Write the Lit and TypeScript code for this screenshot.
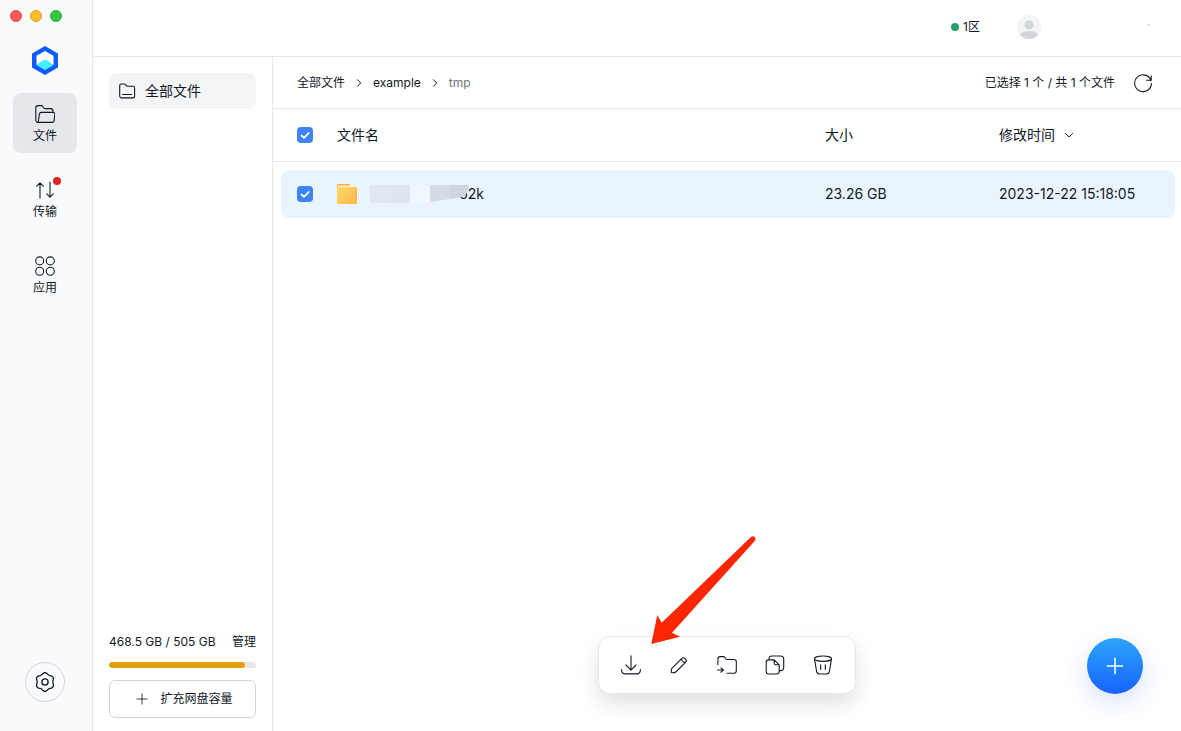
import { LitElement, html, svg, css } from "lit";
import { customElement, property, state } from "lit/decorators.js";
import { classMap } from "lit/directives/class-map.js";

// Outline of a soft cog with six lobes, one of them pointing up.
const cogOutline =
  "M" +
  Array.from({ length: 72 }, (_, i) => {
    const a = (i * Math.PI) / 36;
    const r = 8.6 + 0.8 * Math.cos(6 * a);
    return `${(10 + r * Math.sin(a)).toFixed(2)} ${(10 - r * Math.cos(a)).toFixed(2)}`;
  }).join("L") +
  "Z";

const icons: Record<string, unknown> = {
  folderOpen: svg`<path d="M2.2 18.3C1.3 18 .8 17.3 .8 16.3V3.8C.8 2.4 1.6 1.6 3 1.6H6.3C7.2 1.6 7.6 2 8 2.7L8.6 3.8C9 4.4 9.3 4.6 10 4.6H15.8C17.2 4.6 18 5.4 18 6.8V8.4"/><path d="M2.2 18.3C3 18.1 3.4 17.6 3.5 16.8L4.3 10.4C4.5 9.1 5.1 8.4 6.4 8.4H18C19.4 8.4 20 9.3 19.8 10.6L19.2 16.2C19.1 17.7 18.3 18.4 17 18.4H2.6"/>`,
  transfer: svg`<path d="M5 18V2.800M1.700 6.100 5 2.800 8.300 6.100M15 2V17.200M11.700 13.900 15 17.200 18.300 13.900"/>`,
  apps: svg`<circle cx="4.7" cy="4.9" r="4"/><circle cx="15.3" cy="4.9" r="4"/><circle cx="4.7" cy="15.3" r="4"/><circle cx="15.3" cy="15.3" r="4"/>`,
  gear: svg`<path d=${cogOutline}/><circle cx="10" cy="10" r="3.100"/>`,
  folder: svg`<path d="M2.700 15V4.500C2.700 3.500 3.200 3 4.200 3H7.300C8 3 8.300 3.200 8.600 3.700L9.100 4.400C9.500 5 9.800 5.200 10.500 5.200H15.900C17 5.200 17.600 5.800 17.600 6.900V15.200C17.600 16.300 17 16.900 16 16.900H4.300C3.200 16.900 2.700 16.200 2.700 15ZM5.500 13.500H14.700"/>`,
  chevronRight: svg`<path d="M7.500 4.500 12.800 10 7.500 15.500"/>`,
  chevronDown: svg`<path d="M4 7.500 10 13.200 16 7.500"/>`,
  plus: svg`<path d="M10 1.500V18.500M1.500 10H18.500"/>`,
  refresh: svg`<path d="M18 7.600A8.400 8.400 0 1 0 18.400 10.600M18.200 2.700V7.300H13.600"/>`,
  download: svg`<path d="M10 .8V15M5 10 10 15.200 15 10M.6 14.500C.6 17.800 2 18.900 4.300 18.900H15.700C18 18.900 19.400 17.800 19.400 14.500"/>`,
  edit: svg`<path d="M2.900 13.300 12.600 3.600C13.700 2.500 14.900 2.500 16 3.500L16.600 4.100C17.600 5.200 17.500 6.300 16.500 7.300L6.700 17C6.300 17.400 5.900 17.600 5.400 17.600L3.200 17.800C2.600 17.800 2.300 17.500 2.300 16.900L2.400 14.600C2.400 14 2.500 13.700 2.900 13.300ZM12.600 3.600C12.400 5.600 14.300 7.500 16.500 7.300"/>`,
  move: svg`<path d="M.9 9.500V3.900C.9 2.400 1.600 1.600 3.200 1.600H6.300C7.200 1.600 7.600 1.900 8 2.600L8.700 3.700C9.100 4.300 9.400 4.500 10.100 4.500H17C18.500 4.500 19.300 5.300 19.300 6.800V15.800C19.300 17.500 18.500 18.300 17 18.300H10M.6 15H6.200M4 12.800 6.400 15 4 17.200"/>`,
  copy: svg`<path d="M3.900 4.800C3.900 2.200 4.800 1 7.200 1H15.600C17.800 1 18.700 2 18.700 4.200V12.500C18.700 14.800 17.300 15.600 15.300 15.600H14.400M9.200 4.900H3.600C2.200 4.900 1.200 5.800 1.200 7.200V16.500C1.200 18.100 2.100 19 3.600 19H11.700C13.400 19 14.200 18.100 14.200 16.600V9.800L9.200 4.900V8.200C9.200 9.400 9.700 9.800 10.800 9.800H14.200"/>`,
  trash: svg`<ellipse cx="10" cy="3.700" rx="8.500" ry="2.700"/><path d="M1.500 3.900 3.600 16.400C3.900 18.300 4.800 19 6.400 19H13.600C15.200 19 16.100 18.300 16.400 16.400L18.500 3.900M7.700 9.800V14.400M12.300 9.800V14.400"/>`,
};

@customElement("line-icon")
export class LineIcon extends LitElement {
  @property() name = "";
  @property({ type: Number }) size = 20;
  @property({ type: Number }) stroke = 1.1;

  static styles = css`
    :host { display: inline-flex; flex: none; }
    .glyph { display: block; fill: none; stroke: currentColor; stroke-linecap: round; stroke-linejoin: round; }
  `;

  render() {
    return html`<svg class="glyph" width=${this.size} height=${this.size} viewBox="0 0 20 20"
      stroke-width=${this.stroke} aria-hidden="true">${icons[this.name]}</svg>`;
  }
}

@customElement("app-root")
export class AppRoot extends LitElement {
  @state() private selected = true;
  @state() private section = "文件";

  private nav = [
    { label: "文件", icon: "folderOpen", dot: false },
    { label: "传输", icon: "transfer", dot: true },
    { label: "应用", icon: "apps", dot: false },
  ];

  private actions = [
    { label: "下载", icon: "download" },
    { label: "重命名", icon: "edit" },
    { label: "移动", icon: "move" },
    { label: "复制", icon: "copy" },
    { label: "删除", icon: "trash" },
  ];

  static styles = css`
    :host {
      display: grid;
      grid-template-columns: 93px minmax(0, 1fr);
      min-height: 100vh;
      box-sizing: border-box;
      background: #fff;
      color: #111827;
      font: 12px/16px Inter, "Noto Sans CJK SC", sans-serif;
    }
    *, *::before, *::after { box-sizing: border-box; }
    button {
      margin: 0; padding: 0; border: 0; background: none;
      color: inherit; font: inherit; cursor: pointer;
    }
    a { color: inherit; text-decoration: none; }

    .rail {
      display: flex; flex-direction: column;
      padding: 10px 15px 29px 13px;
      background: #f9fafc; border-right: 1px solid #e5e7eb;
    }
    .lights { display: flex; gap: 8px; margin-left: -3px; }
    .light { width: 12px; height: 12px; border-radius: 50%; border: 1px solid; }
    .close { background: #fc5b57; border-color: #e2443f; }
    .minimize { background: #fdbc2e; border-color: #dfa023; }
    .zoom { background: #33c748; border-color: #27aa35; }
    .logo { display: block; margin: 23px auto 17px; }
    .nav { display: flex; flex-direction: column; gap: 16px; }
    .nav-item {
      display: flex; flex-direction: column; align-items: center; justify-content: center;
      gap: 4px; height: 60px; padding-top: 2px; border-radius: 8px;
    }
    .nav-item.active { background: #e5e7eb; }
    .nav-icon { position: relative; display: flex; }
    .dot {
      position: absolute; top: -3px; right: -6px;
      width: 8px; height: 8px; border-radius: 50%; background: #e02424;
    }
    .settings {
      display: grid; place-items: center;
      width: 40px; height: 40px; margin: auto auto 0;
      border: 1px solid #d1d5db; border-radius: 50%;
    }

    .window { display: grid; grid-template-rows: 57px minmax(0, 1fr); }
    .topbar {
      display: flex; align-items: center; justify-content: flex-end; gap: 37px;
      padding: 0 28px 2px 0; border-bottom: 1px solid #e5e7eb;
    }
    .zone { display: flex; align-items: center; gap: 4px; }
    .zone-dot { width: 8px; height: 8px; border-radius: 50%; background: #22a06b; }
    .account { display: flex; justify-content: space-between; width: 136px; }
    .avatar, .hint { display: block; }

    .body { display: grid; grid-template-columns: 180px minmax(0, 1fr); }
    .side {
      display: flex; flex-direction: column; justify-content: space-between;
      padding: 16px 16px 13px; border-right: 1px solid #e5e7eb;
    }
    .side-item {
      display: flex; align-items: center; gap: 8px; height: 36px; padding: 0 8px;
      border-radius: 8px; background: #f3f4f6; font-size: 14px; line-height: 20px;
    }
    .quota-line { display: flex; justify-content: space-between; }
    .quota-bar {
      display: block; width: 100%; height: 6px; margin: 12px 0;
      appearance: none; border: 0; border-radius: 3px; overflow: hidden; background: #e5e7eb;
    }
    .quota-bar::-webkit-progress-bar { background: #e5e7eb; }
    .quota-bar::-webkit-progress-value { background: #e3a008; border-radius: 3px; }
    .expand {
      display: flex; align-items: center; justify-content: center; gap: 12px;
      width: 100%; height: 38px; padding-left: 4px; border: 1px solid #d1d5db; border-radius: 6px;
    }

    .main { position: relative; }
    .pathbar {
      display: flex; align-items: center; justify-content: space-between;
      height: 52px; padding: 0 28px 0 24px; border-bottom: 1px solid #e5e7eb;
    }
    .crumbs, .status { display: flex; align-items: center; }
    .crumbs { gap: 8px; }
    .current { color: #6b7280; }
    .status { gap: 18px; }
    .refresh { display: flex; }

    .files { display: block; font-size: 14px; line-height: 20px; }
    .files thead, .files tbody { display: block; }
    .line {
      display: grid; align-items: center;
      grid-template-columns: 40px minmax(0, 1fr) 174px 158px;
    }
    .line th, .line td { padding: 0; font-weight: 400; text-align: left; }
    .head { height: 53px; padding: 0 24px; border-bottom: 1px solid #e5e7eb; }
    .row { height: 48px; margin: 8px 6px 8px 8px; padding: 0 18px 0 16px; border-radius: 8px; }
    .row.selected { background: #eaf4ff; }
    .check {
      display: block; width: 16px; height: 16px; margin: 0;
      appearance: none; border: 1px solid #d1d5db; border-radius: 4px; background: #fff;
    }
    .check:checked {
      border: 0;
      background: #3f83f8 url("data:image/svg+xml,%3Csvg xmlns='http://www.w3.org/2000/svg' viewBox='0 0 16 16'%3E%3Cpath d='M4.5 8.5 7 10.8 11.8 5.8' fill='none' stroke='white' stroke-width='1.7' stroke-linecap='round' stroke-linejoin='round'/%3E%3C/svg%3E");
    }
    .sort { display: flex; align-items: center; gap: 8px; }
    .name { display: flex; align-items: center; }
    .type { display: block; }
    .name-text { display: grid; align-items: center; margin-left: 12px; }
    .name-text > * { grid-area: 1 / 1; }
    .tail { justify-self: end; }
    .mask { display: block; z-index: 1; margin-right: 15px; }

    .dock {
      position: absolute; bottom: 37px; left: 50%; transform: translateX(-50%);
      display: flex; padding: 4px 8px;
      background: #fff; border: 1px solid #e5e7eb; border-radius: 12px;
      box-shadow: 0 10px 20px rgba(0, 0, 0, 0.12);
    }
    .action { display: grid; place-items: center; width: 48px; height: 48px; }
    .pointer { position: absolute; left: 50%; bottom: 86px; margin-left: -77px; pointer-events: none; }
    .create {
      position: absolute; right: 38px; bottom: 37px;
      display: grid; place-items: center; width: 56px; height: 56px;
      border-radius: 50%; color: #fff;
      background: linear-gradient(#2ba5fb, #1763fb);
      box-shadow: 0 8px 24px rgba(40, 80, 255, 0.18);
    }
  `;

  private toggle(e: Event) {
    this.selected = (e.target as HTMLInputElement).checked;
  }

  private renderRail() {
    return html`
      <aside class="rail">
        <div class="lights">
          <span class="light close"></span><span class="light minimize"></span><span class="light zoom"></span>
        </div>
        <svg class="logo" width="28" height="31" viewBox="0 0 28 31" aria-hidden="true">
          <path d="M14 1 27 8.4V22.6L14 30 1 22.6V8.4Z" fill="#0f5bff"/>
          <path d="M14 6 22.500 10.800V19.800L14 24.800 5.500 19.800V10.800Z" fill="#fff"/>
          <path d="M6 19.200C9 18.500 10 15 14 15S19 18.500 22 19.200V20.200L14 24.800 6 20.200Z" fill="#3ff0ff"/>
        </svg>
        <nav class="nav">
          ${this.nav.map((n) => html`
            <button class=${classMap({ "nav-item": true, active: n.label === this.section })}
              @click=${() => (this.section = n.label)}>
              <span class="nav-icon">
                <line-icon name=${n.icon}></line-icon>
                ${n.dot ? html`<span class="dot"></span>` : null}
              </span>
              <span>${n.label}</span>
            </button>`)}
        </nav>
        <button class="settings" aria-label="设置"><line-icon name="gear" stroke="1.3"></line-icon></button>
      </aside>`;
  }

  private renderSide() {
    return html`
      <aside class="side">
        <a class="side-item" href="#"><line-icon name="folder"></line-icon>全部文件</a>
        <div>
          <div class="quota-line">
            <label for="quota">468.5 GB / 505 GB</label><a href="#">管理</a>
          </div>
          <progress class="quota-bar" id="quota" max="505" value="468.5"></progress>
          <button class="expand"><line-icon name="plus" size="12" stroke="1.4"></line-icon>扩充网盘容量</button>
        </div>
      </aside>`;
  }

  private renderTable() {
    return html`
      <table class="files">
        <thead>
          <tr class="line head">
            <th><input class="check" type="checkbox" aria-label="全选" .checked=${this.selected} @change=${this.toggle}></th>
            <th>文件名</th>
            <th>大小</th>
            <th><button class="sort">修改时间<line-icon name="chevronDown" size="12" stroke="1.6"></line-icon></button></th>
          </tr>
        </thead>
        <tbody>
          <tr class=${classMap({ line: true, row: true, selected: this.selected })}>
            <td><input class="check" type="checkbox" aria-label="选择文件" .checked=${this.selected} @change=${this.toggle}></td>
            <td class="name">
              <svg class="type" width="21" height="20" viewBox="0 0 21 20" aria-hidden="true">
                <defs><linearGradient id="fold" x1="0" y1="0" x2="1" y2="1">
                  <stop offset="0" stop-color="#ffdc6b"/><stop offset="1" stop-color="#ffb648"/>
                </linearGradient></defs>
                <path d="M0 1Q0 0 1 0H12Q13 0 13 1V4H0Z" fill="#ffb03f"/>
                <path d="M1 1.500H18V5H1Z" fill="#ffefcf"/>
                <rect y="3" width="20" height="17" rx="1.500" fill="url(#fold)"/>
                <path d="M18.500 3Q20 3 20 4.500V18.500Q20 20 18.500 20Z" fill="#ffb648"/>
              </svg>
              <span class="name-text">
                <svg class="mask" width="99" height="18" viewBox="0 0 99 18" aria-hidden="true">
                  <path d="M0 0H20V18H0Z" fill="#e1e7f2"/><path d="M20 0H40V18H20Z" fill="#dfe5f0"/>
                  <path d="M40 0H60V18H40Z" fill="#eff7ff"/><path d="M60 0H80V14L60 17Z" fill="#d5dbe6"/>
                  <path d="M80 0H99Q98 10 92 12L80 14Z" fill="#d0d6e1"/>
                </svg>
                <span class="tail">52k</span>
              </span>
            </td>
            <td>23.26 GB</td>
            <td>2023-12-22 15:18:05</td>
          </tr>
        </tbody>
      </table>`;
  }

  render() {
    return html`
      ${this.renderRail()}
      <div class="window">
        <header class="topbar">
          <span class="zone"><span class="zone-dot"></span>1区</span>
          <button class="account" aria-label="账户">
            <svg class="avatar" width="24" height="24" viewBox="0 0 24 24" aria-hidden="true">
              <clipPath id="face"><circle cx="12" cy="12" r="12"/></clipPath>
              <g clip-path="url(#face)">
                <path d="M0 0H24V24H0Z" fill="#f3f4f6"/>
                <circle cx="12" cy="10" r="4.500" fill="#d1d5db"/>
                <ellipse cx="12" cy="20.500" rx="9" ry="4.500" fill="#d1d5db"/>
              </g>
            </svg>
            <svg class="hint" width="6" height="24" viewBox="0 0 6 24" aria-hidden="true">
              <path d="M.5 9 2.500 10.500" stroke="#9ca3af" stroke-width=".8"/>
            </svg>
          </button>
        </header>
        <div class="body">
          ${this.renderSide()}
          <main class="main">
            <div class="pathbar">
              <nav class="crumbs">
                <a href="#">全部文件</a><line-icon name="chevronRight" size="12" stroke="1.6"></line-icon>
                <a href="#">example</a><line-icon name="chevronRight" size="12" stroke="1.6"></line-icon>
                <span class="current">tmp</span>
              </nav>
              <div class="status">
                <span>已选择 1 个 / 共 1 个文件</span>
                <button class="refresh" aria-label="刷新"><line-icon name="refresh"></line-icon></button>
              </div>
            </div>
            ${this.renderTable()}
            <div class="dock" role="toolbar" aria-label="文件操作">
              ${this.actions.map((a) => html`
                <button class="action" aria-label=${a.label}><line-icon name=${a.icon}></line-icon></button>`)}
            </div>
            <svg class="pointer" width="106" height="110" viewBox="0 0 106 110" aria-hidden="true">
              <path d="M1.300 109 7.300 80 11.700 87.700 100.700 2.200C103.500 -.3 107 3 104.700 6L22 97.700 30 101.700Z" fill="#fb2603"/>
            </svg>
            <button class="create" aria-label="新建"><line-icon name="plus" size="18" stroke="1.700"></line-icon></button>
          </main>
        </div>
      </div>`;
  }
}
